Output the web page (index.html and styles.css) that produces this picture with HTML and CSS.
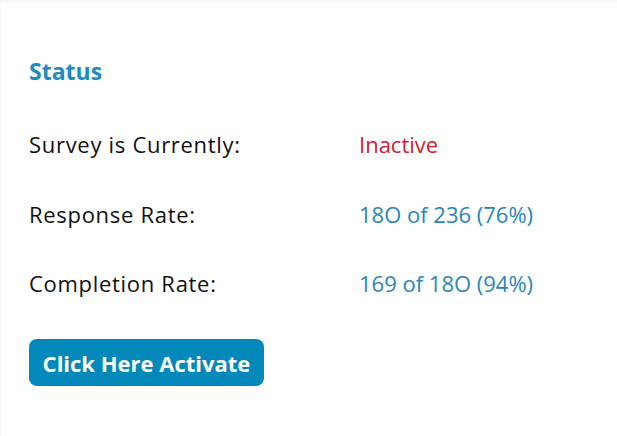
FILE: index.html
```html
<!DOCTYPE html>
<html>
<head>
<meta charset="utf-8">
<link rel="stylesheet" href="styles.css">
</head>
<body>
<div class="card">
  <h2 class="title">Status</h2>
  <div class="rows">
    <div class="row"><span class="label">Survey is Currently:</span><span class="value red">Inactive</span></div>
    <div class="row"><span class="label">Response Rate:</span><span class="value">18O of 236 (76%)</span></div>
    <div class="row"><span class="label">Completion Rate:</span><span class="value">169 of 18O (94%)</span></div>
  </div>
  <button class="btn">Click Here Activate</button>
</div>
</body>
</html>
```
FILE: styles.css
```css
html, body { margin: 0; padding: 0; background: #f7f7f7; }
body { font-family: "Open Sans", Lato, sans-serif; }
.card {
  background: #fff;
  margin: 3px 0 0 1px;
  height: 433px;
  box-sizing: border-box;
  padding: 54px 28px 0 28px;
}
.title {
  margin: 0;
  font-size: 23px;
  font-weight: 700;
  color: #1a8cc0;
  line-height: 28px;
}
.rows { margin-top: 45px; display: flex; flex-direction: column; gap: 41.5px; }
.row { display: grid; grid-template-columns: 330px 1fr; font-size: 22px; line-height: 28px; color: #111; }
.label { letter-spacing: 0.7px; }
.value { color: #2a86b8; }
.value.red { color: #d0202e; }
.btn {
  margin-top: 42px;
  width: 235px;
  height: 47px;
  border: 0;
  border-radius: 8px;
  background: #0288bb;
  color: #fff;
  font-family: "Open Sans", sans-serif;
  font-weight: 700;
  font-size: 22px;
  padding: 0;
}
```
